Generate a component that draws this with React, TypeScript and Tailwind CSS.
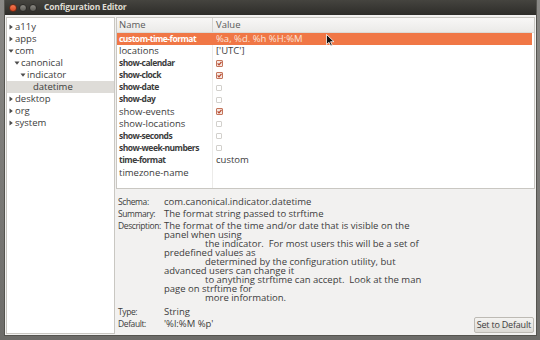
import React from 'react';

type Key = {
  name: string;
  bold: boolean;
  value?: string;
  check?: boolean;
};

const keys: Key[] = [
  { name: 'custom-time-format', bold: true, value: '%a, %d. %h  %H:%M' },
  { name: 'locations', bold: false, value: "['UTC']" },
  { name: 'show-calendar', bold: true, check: true },
  { name: 'show-clock', bold: true, check: true },
  { name: 'show-date', bold: true, check: false },
  { name: 'show-day', bold: true, check: false },
  { name: 'show-events', bold: false, check: true },
  { name: 'show-locations', bold: false, check: false },
  { name: 'show-seconds', bold: true, check: false },
  { name: 'show-week-numbers', bold: true, check: false },
  { name: 'time-format', bold: true, value: 'custom' },
  { name: 'timezone-name', bold: false },
];

const tree = [
  { label: 'a11y', depth: 0, arrow: 'closed' },
  { label: 'apps', depth: 0, arrow: 'closed' },
  { label: 'com', depth: 0, arrow: 'open' },
  { label: 'canonical', depth: 1, arrow: 'open' },
  { label: 'indicator', depth: 2, arrow: 'open' },
  { label: 'datetime', depth: 3, arrow: 'none', selected: true },
  { label: 'desktop', depth: 0, arrow: 'closed' },
  { label: 'org', depth: 0, arrow: 'closed' },
  { label: 'system', depth: 0, arrow: 'closed' },
];

const indents = ['pl-[1px]', 'pl-[7px]', 'pl-[13px]', 'pl-[19px]'];

function Arrow({ open }: { open: boolean }) {
  return (
    <svg width="6" height="6" viewBox="0 0 6 6" className="shrink-0">
      {open ? <path d="M0.5 1.5 L5.5 1.5 L3 4.8 Z" fill="#4c4c4c" /> : <path d="M1.5 0.5 L4.8 3 L1.5 5.5 Z" fill="#4c4c4c" />}
    </svg>
  );
}

function CheckBox({ checked }: { checked: boolean }) {
  if (!checked) {
    return <div className="w-[6px] h-[6px] border border-[#d2d0cc] bg-white rounded-[1px]" />;
  }
  return (
    <div className="w-[7px] h-[7px] border border-[#c4745a] bg-[#f6e7e0] rounded-[1px] flex items-center justify-center">
      <svg width="5" height="5" viewBox="0 0 5 5">
        <path d="M0.6 2.4 L2 3.9 L4.5 0.8" stroke="#b5432a" strokeWidth="1.2" fill="none" />
      </svg>
    </div>
  );
}

function TitleBar() {
  return (
    <div className="h-[15px] flex items-center bg-gradient-to-b from-[#45443f] to-[#2e2d29] pl-[4px] gap-[2px]">
      <div className="w-[8px] h-[8px] rounded-full bg-gradient-to-b from-[#f57a52] to-[#d9461f] border border-[#6b2a17]" />
      <div className="w-[8px] h-[8px] rounded-full bg-gradient-to-b from-[#8c8a84] to-[#5b5a55] border border-[#2c2b28]" />
      <div className="w-[8px] h-[8px] rounded-full bg-gradient-to-b from-[#8c8a84] to-[#5b5a55] border border-[#2c2b28]" />
      <span className="ml-[5px] text-[8.5px] font-bold text-[#dfdbd2] tracking-[-0.2px]">Configuration Editor</span>
    </div>
  );
}

function Tree() {
  return (
    <div className="w-[109px] bg-white border border-[#c9c7c2] pt-[3px] flex flex-col">
      {tree.map((n) => (
        <div
          key={n.label}
          className={`h-[12px] flex items-center gap-[1px] ${indents[n.depth]} ${n.selected ? 'bg-[#dedcd8]' : ''}`}
        >
          {n.arrow === 'none' ? <div className="w-[6px]" /> : <Arrow open={n.arrow === 'open'} />}
          <span className="text-[9.5px] text-[#3c3c3c]">{n.label}</span>
        </div>
      ))}
    </div>
  );
}

function KeyList() {
  return (
    <div className="h-[172px] bg-white border border-[#c9c7c2] flex flex-col">
      <div className="h-[15px] shrink-0 flex bg-gradient-to-b from-[#f8f7f6] to-[#ebeae8] border-b border-[#dcdad6] text-[9.5px] text-[#5a5a5a]">
        <div className="w-[96px] pl-[2px] flex items-center border-r border-[#d6d4d0]">Name</div>
        <div className="flex-1 pl-[3px] flex items-center">Value</div>
      </div>
      {keys.map((k, i) => {
        const sel = i === 0;
        return (
          <div
            key={k.name}
            className={`h-[12.15px] shrink-0 flex text-[9.5px] ${sel ? 'bg-[#f07746] text-white mr-[2px]' : 'text-[#3c3c3c]'}`}
          >
            <div
              className={`w-[96px] pl-[2px] flex items-center ${sel ? '' : 'border-r border-[#ecebe9]'} ${
                k.bold ? 'font-bold text-[8.5px] tracking-[-0.5px]' : ''
              }`}
            >
              {k.name}
            </div>
            <div className={`flex-1 pl-[3px] flex items-center ${sel ? 'text-[#fbe3d8]' : ''}`}>
              {k.check !== undefined ? <CheckBox checked={k.check} /> : k.value}
            </div>
          </div>
        );
      })}
      <div className="flex-1 flex">
        <div className="w-[96px] border-r border-[#ecebe9]" />
      </div>
    </div>
  );
}

function Info() {
  const label = 'w-[46px] shrink-0 text-[8.5px] tracking-[-0.4px]';
  return (
    <div className="flex-1 flex flex-col pl-[2px] pt-[7px] text-[9.5px] text-[#3c3c3c]">
      <div className="h-[12px] flex items-center">
        <span className={label}>Schema:</span>
        <span>com.canonical.indicator.datetime</span>
      </div>
      <div className="h-[12px] flex items-center">
        <span className={label}>Summary:</span>
        <span>The format string passed to strftime</span>
      </div>
      <div className="flex leading-[9px] pt-[1px]">
        <span className={label}>Description:</span>
        <div className="flex flex-col">
          <span>The format of the time and/or date that is visible on the</span>
          <span>panel when using</span>
          <span className="pl-[41px]">the indicator.&nbsp; For most users this will be a set of</span>
          <span>predefined values as</span>
          <span className="pl-[41px]">determined by the configuration utility, but</span>
          <span>advanced users can change it</span>
          <span className="pl-[41px]">to anything strftime can accept.&nbsp; Look at the man</span>
          <span>page on strftime for</span>
          <span className="pl-[41px]">more information.</span>
        </div>
      </div>
      <div className="flex items-end mt-[4px]">
        <div className="flex-1 flex flex-col">
          <div className="h-[12px] flex items-center">
            <span className={label}>Type:</span>
            <span>String</span>
          </div>
          <div className="h-[12px] flex items-center">
            <span className={label}>Default:</span>
            <span>'%l:%M %p'</span>
          </div>
        </div>
        <button className="h-[16px] px-[2px] mr-[1px] mb-[-3px] rounded-[2px] border border-[#bdbab4] bg-gradient-to-b from-[#f4f3f1] to-[#dcdad5] text-[9px] text-[#3c3c3c] tracking-[-0.2px]">
          Set to Default
        </button>
      </div>
    </div>
  );
}

export default function App() {
  return (
    <div
      className="w-[540px] h-[340px] flex bg-gradient-to-b from-[#8a8986] to-[#6d6c69] overflow-hidden relative"
      style={{ fontFamily: '"Open Sans", "Noto Sans", sans-serif' }}
    >
      <div className="w-[4px] shrink-0" />
      <div className="w-[533px] h-[336px] flex flex-col border-x border-b border-[#55544f] bg-[#f2f1f0]">
        <TitleBar />
        <div className="flex-1 flex gap-[1px] p-[1px] pt-[2px]">
          <Tree />
          <div className="flex-1 flex flex-col">
            <KeyList />
            <Info />
          </div>
        </div>
      </div>
      <svg width="9" height="13" viewBox="0 0 9 13" className="absolute left-[326px] top-[34px]">
        <path d="M0.5 0.5 L0.5 10.5 L3 8.3 L4.7 12 L6.3 11.3 L4.6 7.7 L8 7.7 Z" fill="#111" stroke="#fff" strokeWidth="0.8" />
      </svg>
    </div>
  );
}
